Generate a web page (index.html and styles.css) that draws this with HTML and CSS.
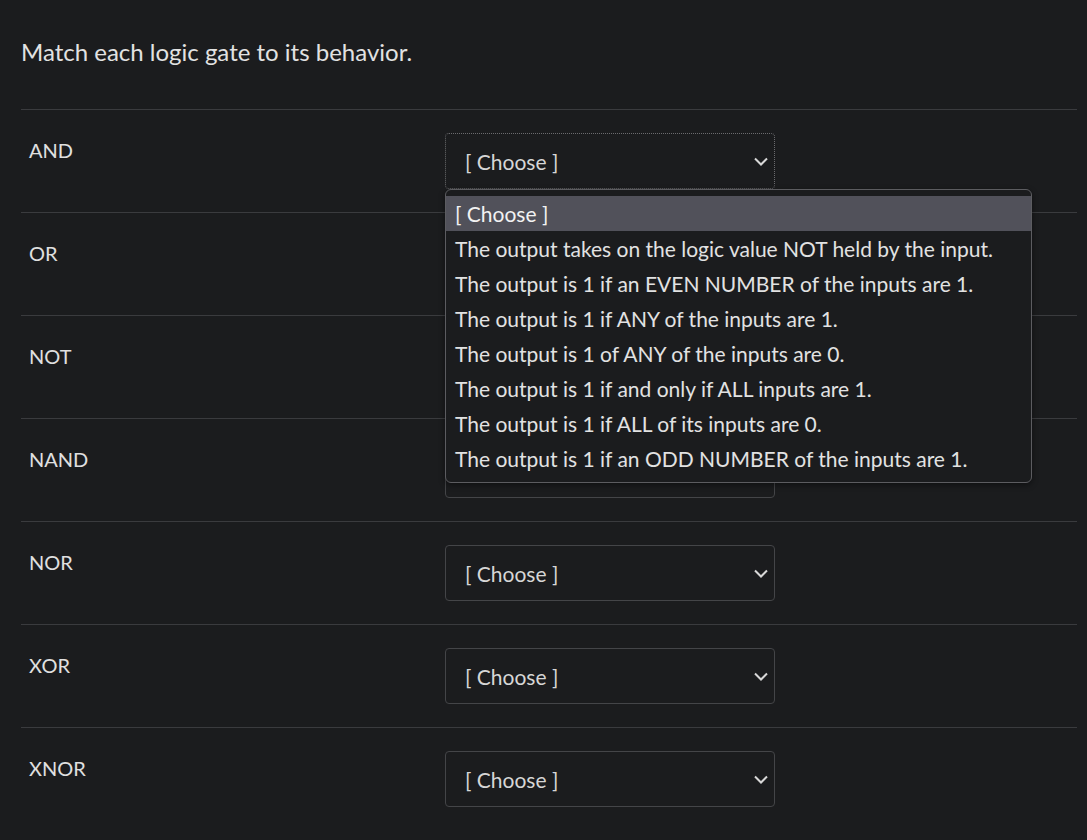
FILE: index.html
```html
<!DOCTYPE html>
<html lang="en">
<head>
<meta charset="utf-8">
<title>Match logic gates</title>
<link rel="stylesheet" href="styles.css">
</head>
<body>
<main class="page">
  <p class="prompt">Match each logic gate to its behavior.</p>
  <div class="rows">
    <div class="row">
      <div class="gate">AND</div>
      <div class="field">
        <div class="select is-focused">
          <span class="select-text">[ Choose ]</span>
          <svg class="chev" width="14" height="9" viewBox="0 0 14 9"><path d="M1 1.5 L7 7.5 L13 1.5" fill="none" stroke="currentColor" stroke-width="2"/></svg>
        </div>
        <ul class="menu">
          <li class="opt is-active">[ Choose ]</li>
          <li class="opt">The output takes on the logic value NOT held by the input.</li>
          <li class="opt">The output is 1 if an EVEN NUMBER of the inputs are 1.</li>
          <li class="opt">The output is 1 if ANY of the inputs are 1.</li>
          <li class="opt">The output is 1 of ANY of the inputs are 0.</li>
          <li class="opt">The output is 1 if and only if ALL inputs are 1.</li>
          <li class="opt">The output is 1 if ALL of its inputs are 0.</li>
          <li class="opt">The output is 1 if an ODD NUMBER of the inputs are 1.</li>
        </ul>
      </div>
    </div>
    <div class="row">
      <div class="gate">OR</div>
      <div class="field">
        <div class="select">
          <span class="select-text">[ Choose ]</span>
          <svg class="chev" width="14" height="9" viewBox="0 0 14 9"><path d="M1 1.5 L7 7.5 L13 1.5" fill="none" stroke="currentColor" stroke-width="2"/></svg>
        </div>
      </div>
    </div>
    <div class="row">
      <div class="gate">NOT</div>
      <div class="field">
        <div class="select">
          <span class="select-text">[ Choose ]</span>
          <svg class="chev" width="14" height="9" viewBox="0 0 14 9"><path d="M1 1.5 L7 7.5 L13 1.5" fill="none" stroke="currentColor" stroke-width="2"/></svg>
        </div>
      </div>
    </div>
    <div class="row">
      <div class="gate">NAND</div>
      <div class="field">
        <div class="select">
          <span class="select-text">[ Choose ]</span>
          <svg class="chev" width="14" height="9" viewBox="0 0 14 9"><path d="M1 1.5 L7 7.5 L13 1.5" fill="none" stroke="currentColor" stroke-width="2"/></svg>
        </div>
      </div>
    </div>
    <div class="row">
      <div class="gate">NOR</div>
      <div class="field">
        <div class="select">
          <span class="select-text">[ Choose ]</span>
          <svg class="chev" width="14" height="9" viewBox="0 0 14 9"><path d="M1 1.5 L7 7.5 L13 1.5" fill="none" stroke="currentColor" stroke-width="2"/></svg>
        </div>
      </div>
    </div>
    <div class="row">
      <div class="gate">XOR</div>
      <div class="field">
        <div class="select">
          <span class="select-text">[ Choose ]</span>
          <svg class="chev" width="14" height="9" viewBox="0 0 14 9"><path d="M1 1.5 L7 7.5 L13 1.5" fill="none" stroke="currentColor" stroke-width="2"/></svg>
        </div>
      </div>
    </div>
    <div class="row">
      <div class="gate">XNOR</div>
      <div class="field">
        <div class="select">
          <span class="select-text">[ Choose ]</span>
          <svg class="chev" width="14" height="9" viewBox="0 0 14 9"><path d="M1 1.5 L7 7.5 L13 1.5" fill="none" stroke="currentColor" stroke-width="2"/></svg>
        </div>
      </div>
    </div>
  </div>
</main>
</body>
</html>
```

FILE: styles.css
```css
html, body {
  margin: 0;
  padding: 0;
  background: #1b1c1e;
}

body {
  color: #dedede;
  font-family: Lato, "Noto Sans", "Liberation Sans", sans-serif;
  overflow: hidden;
}

.page {
  padding: 37px 10px 0 21px;
}

.prompt {
  margin: 0 0 43px 0;
  font-size: 24px;
  line-height: 29px;
  color: #e2e2e2;
}

.row {
  display: grid;
  grid-template-columns: 424px 1fr;
  align-items: start;
  border-top: 1px solid #3a3b3e;
  padding: 23px 0;
  height: 56px;
}

.gate {
  padding: 5px 8px 0;
  font-size: 20px;
  line-height: 24px;
  color: #e0e0e0;
}

.field {
  position: relative;
}

.select {
  box-sizing: border-box;
  width: 330px;
  height: 56px;
  display: flex;
  align-items: center;
  justify-content: space-between;
  padding: 0 6px 0 19px;
  border: 1px solid #444548;
  border-radius: 4px;
  background: #1b1c1e;
  color: #d6d6d6;
  font-size: 21px;
}

.select.is-focused {
  border: 1px dotted #6b6b6e;
}

.chev {
  color: #d8d8d8;
  margin-top: 1px;
}

.menu {
  position: absolute;
  top: 56px;
  left: 0;
  box-sizing: border-box;
  width: 587px;
  margin: 0;
  padding: 6px 0 6px;
  list-style: none;
  background: #1b1c1e;
  border: 1px solid #5c5c60;
  border-radius: 6px;
  box-shadow: 0 2px 6px rgba(0, 0, 0, 0.45);
  z-index: 10;
}

.opt {
  height: 35px;
  line-height: 35px;
  padding: 0 9px;
  font-size: 21px;
  color: #e2e2e2;
  white-space: nowrap;
}

.opt.is-active {
  background: #51515a;
  color: #f2f2f2;
}
```
